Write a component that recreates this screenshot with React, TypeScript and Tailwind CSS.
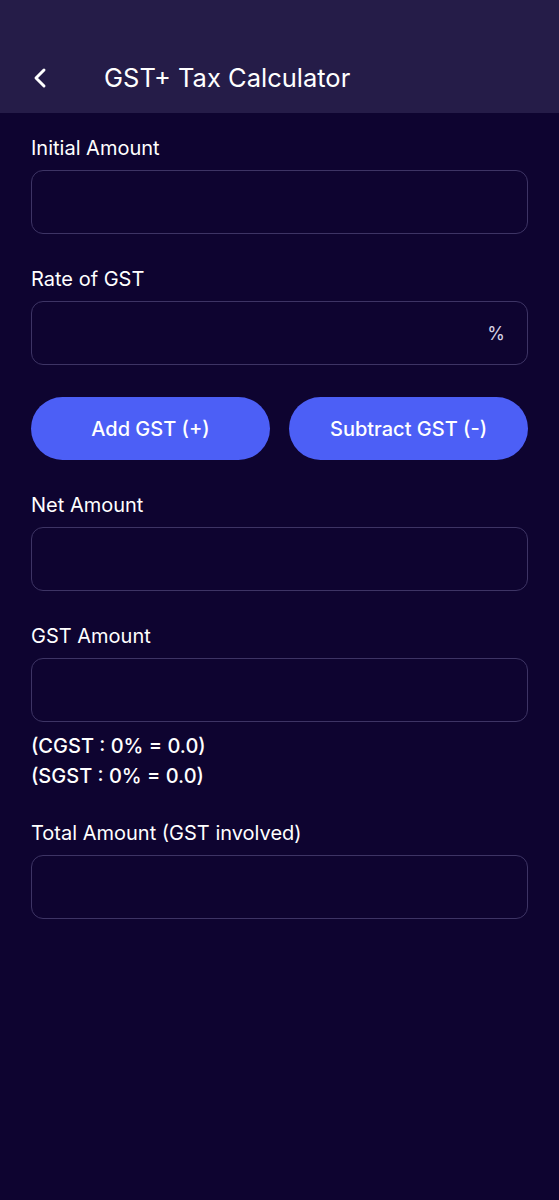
import { ChevronLeft } from 'lucide-react';

function Field({ label, suffix }: { label: string; suffix?: string }) {
  return (
    <div className="flex flex-col">
      <label className="text-[20px] leading-6 text-white">{label}</label>
      <div className="mt-[10px] h-16 rounded-xl border border-[#3d3464] flex items-center justify-end px-[22px]">
        {suffix && <span className="text-[18px] text-[#d6d2e4]">{suffix}</span>}
      </div>
    </div>
  );
}

export default function App() {
  return (
    <div
      className="min-h-[1200px] w-full bg-[#0e0430] text-white"
      style={{ fontFamily: 'Inter, "Noto Sans", sans-serif' }}
    >
      {/* Header */}
      <div className="h-[113px] bg-[#251c48] flex items-end pb-[19px] px-7">
        <ChevronLeft className="w-8 h-8 text-white -ml-1" strokeWidth={2.2} />
        <h1 className="ml-[48px] text-[25.5px] leading-8 text-white">GST+ Tax Calculator</h1>
      </div>

      {/* Form */}
      <div className="px-[31px] pt-[23px] flex flex-col">
        <Field label="Initial Amount" />
        <div className="mt-[33px]">
          <Field label="Rate of GST" suffix="%" />
        </div>

        <div className="mt-8 grid grid-cols-2 gap-[19px]">
          <button className="h-[63px] rounded-full bg-[#4c5ff6] text-[20px] font-medium text-white">
            Add GST (+)
          </button>
          <button className="h-[63px] rounded-full bg-[#4c5ff6] text-[20px] font-medium text-white">
            Subtract GST (-)
          </button>
        </div>

        <div className="mt-[33px]">
          <Field label="Net Amount" />
        </div>
        <div className="mt-[33px]">
          <Field label="GST Amount" />
        </div>
        <div className="mt-[9px] text-[20px] leading-[30px] font-medium">
          <p>(CGST : 0% = 0.0)</p>
          <p>(SGST : 0% = 0.0)</p>
        </div>
        <div className="mt-[30px]">
          <Field label="Total Amount (GST involved)" />
        </div>
      </div>
    </div>
  );
}
